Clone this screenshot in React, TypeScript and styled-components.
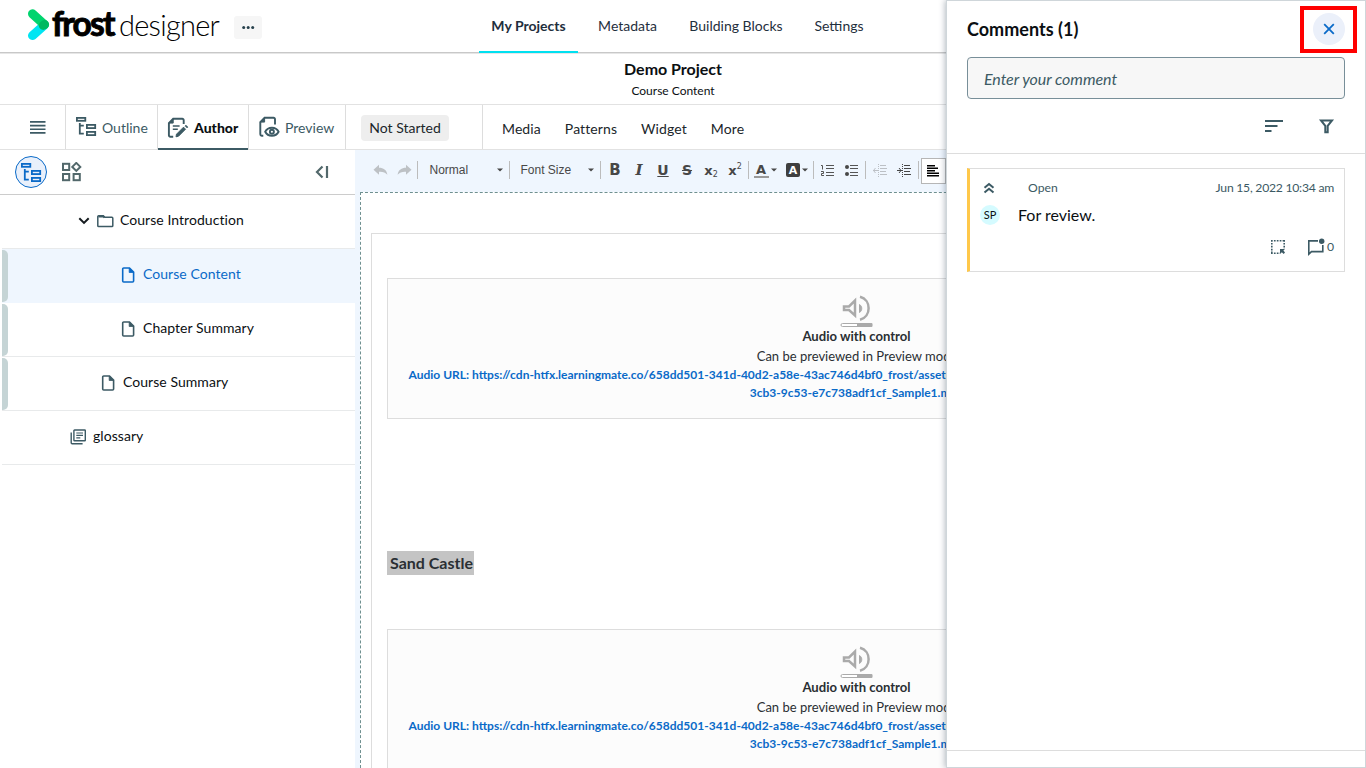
import React from 'react';
import styled, { createGlobalStyle, css } from 'styled-components';

const slate = '#3c5a64';
const blue = '#0a6ac8';
const line = '#dddddd';

const GlobalStyle = createGlobalStyle`
  * { box-sizing: border-box; }
  body { margin: 0; background: #fff; overflow: hidden; }
  svg { display: block; flex: none; }
`;

const Page = styled.div`
  position: relative;
  width: 1366px;
  height: 768px;
  overflow: hidden;
  display: flex;
  flex-direction: column;
  background: #fff;
  color: #0b0f12;
  font-family: Lato, 'Liberation Sans', sans-serif;
  font-size: 14px;
  white-space: nowrap;
`;

const Header = styled.header`
  height: 53px;
  flex: none;
  display: flex;
  border-bottom: 1px solid #c8c8c8;
  box-shadow: 0 1px 0 #e6e6e6;
`;

const Brand = styled.div`
  width: 479px;
  display: flex;
  padding: 9px 0 0 28px;
  color: #000;
`;

const FrostWord = styled.span`
  width: 67px;
  margin-left: 2px;
  font-size: 33.5px;
  line-height: 28px;
  font-weight: 700;
  letter-spacing: -1.75px;
  -webkit-text-stroke: 0.9px #000;
`;

const DesignerWord = styled.span`
  width: 115px;
  font-size: 29px;
  line-height: 31px;
  font-weight: 300;
  letter-spacing: -0.75px;
`;

const MoreButton = styled.button`
  width: 28px;
  height: 23px;
  margin-top: 7px;
  border: 0;
  border-radius: 3px;
  padding: 0;
  background: #f6f6f6;
  display: flex;
  align-items: center;
  justify-content: center;
`;

const Nav = styled.nav`
  display: flex;
  height: 53px;
`;

const NavItem = styled.a<{ $w: number; $active?: boolean }>`
  width: ${p => p.$w}px;
  height: 53px;
  padding-top: 17px;
  line-height: 18px;
  text-align: center;
  color: #1f2f3d;
  ${p => p.$active && css`
    font-weight: 700;
    border-bottom: 2px solid #00e0f0;
  `}
`;

const TitleBar = styled.div`
  height: 52px;
  flex: none;
  width: 1346px;
  text-align: center;
`;

const ProjectTitle = styled.h1`
  margin: 0;
  padding-top: 6px;
  font-size: 16px;
  line-height: 20px;
  font-weight: 700;
  letter-spacing: -0.02px;
`;

const ProjectSub = styled.div`
  margin-top: 4px;
  font-size: 12px;
  line-height: 16px;
`;

const ModeBar = styled.div`
  height: 46px;
  flex: none;
  display: flex;
  border-top: 1px solid #e2e2e2;
  border-bottom: 1px solid #e2e2e2;
  margin-top: -1px;
`;

const ModeCell = styled.div<{ $w: number; $pad?: number; $top?: number; $active?: boolean }>`
  width: ${p => p.$w}px;
  height: ${p => (p.$active ? 45 : 44)}px;
  padding: ${p => p.$top ?? 0}px 0 0 ${p => p.$pad ?? 9}px;
  border-right: 1px solid ${line};
  display: flex;
  align-items: center;
  gap: 5px;
  color: ${p => (p.$active ? '#0b0f12' : slate)};
  font-weight: ${p => (p.$active ? 900 : 400)};
  ${p => p.$active && css`box-shadow: inset 0 -2px 0 ${slate};`}
`;

const Status = styled.span`
  height: 26px;
  width: 88px;
  line-height: 26px;
  border-radius: 4px;
  background: #eeeeee;
  text-align: center;
  color: #20262a;
`;

const Menu = styled.div`
  display: flex;
  gap: 24px;
  padding: 15px 0 0 19px;
  line-height: 18px;
  letter-spacing: 0.1px;
  color: #20262a;
`;

const Body = styled.div`
  flex: 1;
  min-height: 0;
  display: flex;
`;

const Sidebar = styled.aside`
  width: 355px;
  flex: none;
`;

const SideTools = styled.div`
  height: 45px;
  display: flex;
  align-items: center;
  padding-left: 15px;
  border-bottom: 1px solid #cccccc;
`;

const RoundTool = styled.button`
  width: 32px;
  height: 32px;
  padding: 2px 0 0 0;
  border: 1px solid ${blue};
  border-radius: 50%;
  background: #e9f0fb;
  display: flex;
  align-items: center;
  justify-content: center;
  margin-right: 15px;
`;

const Collapse = styled.span`
  margin-left: 233px;
`;

const TreeRow = styled.div<{ $indent: number; $active?: boolean; $marked?: boolean }>`
  height: 54px;
  display: flex;
  align-items: center;
  margin-left: 2px;
  padding: 0 0 5px ${p => p.$indent - 2}px;
  border-bottom: 1px solid ${p => (p.$active ? '#eff6fe' : '#e8eaeb')};
  background: ${p => (p.$active ? '#eff6fe' : '#fff')};
  color: ${p => (p.$active ? blue : '#0b0f12')};
  letter-spacing: 0.05px;
  ${p => p.$marked && css`
    padding-left: 0;
    &::before {
      content: '';
      align-self: flex-start;
      flex: none;
      width: 6px;
      height: 52px;
      margin: 1px ${p.$indent - 8}px -5px 0;
      border-radius: 0 5px 5px 0;
      background: #c5d4d5;
    }
  `}
`;

const TreeIcon = styled.span`
  width: 24px;
  flex: none;
  padding-top: 4px;
`;

const Chevron = styled.span`
  width: 18px;
  padding-top: 4px;
`;

const Editor = styled.main`
  flex: 1;
  min-width: 0;
  background: #eff6fe;
  display: flex;
  flex-direction: column;
`;

const Toolbar = styled.div`
  height: 42px;
  flex: none;
  display: flex;
  align-items: center;
  padding-left: 13px;
  padding-bottom: 2px;
`;

const Tool = styled.span<{ $w?: number; $ml?: number }>`
  width: ${p => p.$w ?? 24}px;
  height: 24px;
  flex: none;
  margin-left: ${p => p.$ml ?? 0}px;
  display: flex;
  align-items: center;
  justify-content: center;
`;

const Divider = styled.i<{ $ml?: number }>`
  width: 1px;
  height: 18px;
  flex: none;
  margin-left: ${p => p.$ml ?? 0}px;
  background: #bcbcbc;
`;

const Picker = styled.span<{ $w: number; $pad?: number }>`
  width: ${p => p.$w}px;
  flex: none;
  display: flex;
  align-items: center;
  justify-content: space-between;
  padding: 0 6px 0 ${p => p.$pad ?? 10.5}px;
  font: 12px/16px 'Liberation Sans', Arial, sans-serif;
  color: #484848;
`;

const AlignButton = styled.span`
  width: 25px;
  height: 26px;
  flex: none;
  margin: 1px 0 0 2px;
  border: 1px solid #b6b6b6;
  background: #fff;
  display: flex;
  align-items: center;
  justify-content: center;
`;

const Canvas = styled.div`
  flex: 1;
  min-height: 0;
  margin-left: 5px;
  padding: 40px 0 0 10px;
  border: 1px dashed #6f9090;
  border-bottom: 0;
  background: #fff;
`;

const Sheet = styled.div`
  width: 971px;
  height: 700px;
  padding: 44px 15px 0;
  border: 1px solid ${line};
`;

const AudioBox = styled.section`
  width: 939px;
  height: 141px;
  border: 1px solid ${line};
  background: #fcfcfc;
  display: flex;
  flex-direction: column;
  align-items: center;
  padding-top: 15px;
  overflow: hidden;
  color: #2a2f33;
`;

const AudioName = styled.b`
  font-size: 13.1px;
  line-height: 20px;
  margin-top: -2px;
`;

const AudioHint = styled.span`
  font-size: 13px;
  line-height: 20px;
  padding-left: 1px;
`;

const AudioLink = styled.a<{ $lead?: boolean }>`
  font-size: 12px;
  line-height: 18px;
  font-weight: 700;
  color: ${blue};
  padding-left: 1px;
  ${p => p.$lead && css`
    align-self: flex-start;
    padding-left: 20.5px;
  `}
`;

const Selected = styled.h2`
  width: 87px;
  height: 24px;
  margin: 132px 0 54px;
  padding-left: 3px;
  background: #c4c4c4;
  color: #2a2f33;
  font-size: 16px;
  line-height: 24px;
  font-weight: 700;
`;

const Drawer = styled.aside`
  position: absolute;
  top: 0;
  left: 946px;
  width: 420px;
  height: 768px;
  border: 1px solid #cfd6da;
  background: #fff;
  box-shadow: -1px 0 6px rgba(40, 60, 80, 0.35);
  display: flex;
  flex-direction: column;
`;

const DrawerTop = styled.div`
  height: 153px;
  flex: none;
  padding: 0 20px;
  border-bottom: 1px solid ${line};
`;

const DrawerHead = styled.div`
  height: 56px;
  display: flex;
  justify-content: space-between;
  margin-right: -12px;
`;

const DrawerTitle = styled.h2`
  margin: 0;
  padding-top: 16px;
  font-size: 18px;
  line-height: 24px;
  font-weight: 700;
  letter-spacing: 0.03px;
`;

const Highlight = styled.div`
  width: 57px;
  height: 47px;
  margin-top: 5px;
  padding-bottom: 1px;
  border: 4px solid #ff0000;
  display: flex;
  align-items: center;
  justify-content: center;
`;

const CloseButton = styled.button`
  width: 32px;
  height: 32px;
  padding: 0;
  border: 0;
  border-radius: 50%;
  background: #ebf0fa;
  display: flex;
  align-items: center;
  justify-content: center;
`;

const CommentField = styled.div`
  height: 42px;
  padding: 1px 0 0 16px;
  border: 1px solid #788f99;
  border-radius: 4px;
  background: #f7f7f7;
  color: ${slate};
  font-size: 16px;
  line-height: 39px;
  letter-spacing: -0.05px;
  font-style: italic;
`;

const FilterRow = styled.div`
  display: flex;
  justify-content: flex-end;
  align-items: center;
  gap: 33px;
  padding: 17px 9px 0 0;
`;

const DrawerList = styled.div`
  flex: 1;
  padding: 14px 20px;
`;

const DrawerFoot = styled.div`
  height: 17px;
  border-top: 1px solid ${line};
`;

const Card = styled.article`
  height: 104px;
  border: 1px solid ${line};
  border-left: 3px solid #ffc84a;
  padding: 10px 10px 0 10px;
`;

const CardRow = styled.div<{ $h: number; $end?: boolean }>`
  height: ${p => p.$h}px;
  display: flex;
  align-items: center;
  justify-content: ${p => (p.$end ? 'flex-end' : 'flex-start')};
`;

const Meta = styled.span<{ $date?: boolean; $ml?: number }>`
  font-size: 12.2px;
  line-height: 16px;
  color: ${slate};
  margin-left: ${p => (p.$date ? 'auto' : `${p.$ml ?? 0}px`)};
  letter-spacing: ${p => (p.$date ? '-0.25px' : 'normal')};
`;

const Avatar = styled.span`
  width: 20px;
  height: 20px;
  margin-right: 18px;
  border-radius: 50%;
  background: #d5fbff;
  font-size: 11px;
  line-height: 20px;
  text-align: center;
`;

const CommentText = styled.span`
  font-size: 16px;
  line-height: 22px;
`;

const RegionMark = styled.svg`
  margin-right: 21px;
`;

const OutlineIcon = ({ color = slate }: { color?: string }) => (
  <svg width="22" height="22" viewBox="0 0 22 22" fill="none" stroke={color} strokeWidth="1.8">
    <rect x="1.900" y="1.900" width="8.400" height="2.900" />
    <path d="M4.800 7v10.700h4M4.800 9.700h4" />
    <rect x="11.900" y="8.900" width="8.300" height="3.200" />
    <rect x="11.900" y="15.900" width="8.300" height="3.200" />
  </svg>
);

const AuthorIcon = () => (
  <svg width="22" height="22" viewBox="0 0 22 22" fill="none" stroke={slate} strokeWidth="1.9">
    <path d="M16.700 7V3.200a1.400 1.400 0 0 0-1.400-1.400H6.200L1.900 6.100v12.200a1.400 1.400 0 0 0 1.400 1.400h2.900" />
    <path d="M6.200 1.800v4.300H1.900z" fill={slate} strokeWidth="1" />
    <path d="M5.800 9h6.800M5.800 12.200h5" strokeWidth="1.400" />
    <path d="M9 19.800l.5-2.600 7-7 2 2-7 7z" fill={slate} strokeWidth="1" />
    <path d="M18 9.200l.9-.9 1.800 1.800-.9.900" fill={slate} strokeWidth="1" />
  </svg>
);

const PreviewIcon = () => (
  <svg width="22" height="22" viewBox="0 0 22 22" fill="none" stroke={slate} strokeWidth="1.9">
    <path d="M17 8.500V3.200a1.400 1.400 0 0 0-1.400-1.400H6.600L2.300 6.100v12.200a1.400 1.400 0 0 0 1.400 1.400h1.600" />
    <path d="M6.600 1.800v4.300H2.300z" fill={slate} strokeWidth="1" />
    <path d="M7.200 15.800c1.400-2.700 3.800-4 6.700-4s5.300 1.300 6.700 4c-1.400 2.700-3.800 4-6.700 4s-5.300-1.300-6.700-4z" />
    <circle cx="13.900" cy="15.800" r="2" />
  </svg>
);

const FileIcon = ({ color = slate }: { color?: string }) => (
  <svg width="18" height="18" viewBox="0 0 18 18" fill="none" stroke={color} strokeWidth="1.600">
    <path d="M10.500 2H4.700a1 1 0 0 0-1 1v12a1 1 0 0 0 1 1h8.900a1 1 0 0 0 1-1V6.200z" />
    <path d="M10.200 2v4.500h4.400z" fill={color} strokeWidth=".8" />
  </svg>
);

const FolderIcon = () => (
  <svg width="18" height="18" viewBox="0 0 18 18" fill="none" stroke={slate} strokeWidth="1.500">
    <path d="M2.700 3.800h4.600l1.600 1.500h7a.9.900 0 0 1 .9.900v7.500a.9.900 0 0 1-.9.900H2.700a.9.900 0 0 1-.9-.9V4.700a.9.900 0 0 1 .9-.9z" />
    <path d="M2.500 4.500h4.800l1.200 1.200" strokeWidth="1.800" />
  </svg>
);

const GlossaryIcon = () => (
  <svg width="18" height="18" viewBox="0 0 18 18" fill="none" stroke={slate} strokeWidth="1.400">
    <rect x="4.900" y="2" width="11.400" height="10.800" rx=".6" />
    <path d="M2.200 4.400v10.400a.9.900 0 0 0 .9.900h10.500" />
    <path d="M7.300 5h6.700M7.300 7.400h6.700M7.300 9.800h4" strokeWidth="1.200" />
  </svg>
);

const Caret = () => (
  <svg width="6" height="4" viewBox="0 0 6 4"><path d="M0 .5h6L3 3.600z" fill="#474747" /></svg>
);

const Undo = ({ flip }: { flip?: boolean }) => (
  <svg width="15" height="12" viewBox="0 0 15 12">
    <path
      transform={flip ? 'translate(15 0) scale(-1 1)' : undefined}
      d="M6 .8v3c4.400 0 7.600 2 8.400 7C12.400 8.400 9.800 7.600 6 7.800v3L.5 5.800z"
      fill="#bdc1c5"
    />
  </svg>
);

const Glyph = styled.span<{ $size?: number; $serif?: boolean; $line?: string; $color?: string }>`
  font-family: ${p => (p.$serif ? "'DejaVu Serif', serif" : "'DejaVu Sans', sans-serif")};
  font-size: ${p => p.$size ?? 15}px;
  line-height: 17px;
  font-weight: 700;
  font-style: ${p => (p.$serif ? 'italic' : 'normal')};
  text-decoration: ${p => p.$line ?? 'none'};
  text-decoration-thickness: 1px;
  color: ${p => p.$color ?? '#474747'};
`;

const Script = styled.span<{ $up?: boolean }>`
  font: 400 8px/8px 'DejaVu Sans', sans-serif;
  color: #474747;
  margin-top: ${p => (p.$up ? -6 : 10)}px;
`;

const ColorA = styled.span`
  width: 15px;
  height: 16px;
  border-bottom: 2px solid #999;
  margin-right: 2px;
  display: flex;
  justify-content: center;
  align-items: center;
`;

const FilledA = styled.span`
  width: 14px;
  height: 14px;
  border-radius: 2px;
  background: #3f3f3f;
  margin-right: 2px;
  display: flex;
  justify-content: center;
  align-items: center;
`;

const NumberList = () => (
  <svg width="13" height="13" viewBox="0 0 13 13" fill="none" stroke="#555">
    <path d="M0 1.500h1.500v4M0 7.500h2.500v2H.5v2H3" />
    <path d="M5 1.500h8M5 4.500h8M5 8.500h8M5 11.500h8" />
  </svg>
);

const BulletList = () => (
  <svg width="13" height="13" viewBox="0 0 13 13" fill="none" stroke="#555">
    <circle cx="2" cy="3" r="2" fill="#474747" stroke="none" />
    <circle cx="2" cy="10" r="2" fill="#474747" stroke="none" />
    <path d="M5 1.500h8M5 4.500h8M5 8.500h8M5 11.500h8" />
  </svg>
);

const Indent = ({ out }: { out?: boolean }) => (
  <svg width="14" height="13" viewBox="0 0 14 13" fill="none" stroke={out ? '#bcc0c5' : '#474747'}>
    <path d="M5.500 0v13" strokeDasharray="1 1" />
    <path d="M7 1.500h6M7 4.500h7M7 7.500h6M7 10.500h7" />
    <path d={out ? 'M0 6.500h5M2.500 4L.5 6.500l2 2.500' : 'M0 6.500h5M2 4l2 2.500-2 2.500'} />
  </svg>
);

const Speaker = () => (
  <svg width="34" height="34" viewBox="0 0 34 34" fill="none" stroke="#aaa">
    <path d="M4 12.500h5L15 6.500v15l-6-5.500H4z" strokeWidth="2.500" />
    <path d="M19.500 10.500c3 1.800 3 6.200 0 8z" fill="#aaa" strokeWidth="1" />
    <path d="M20 2.800c11.500 3 11.500 20 0 23" strokeWidth="2.500" />
    <rect x="1" y="29.500" width="31" height="3" rx="1.500" fill="#fff" strokeWidth="1" />
    <path d="M17 31h15.300" strokeWidth="3.800" />
  </svg>
);

function AudioWidget() {
  return (
    <AudioBox>
      <Speaker />
      <AudioName>Audio with control</AudioName>
      <AudioHint>Can be previewed in Preview mode</AudioHint>
      <AudioLink $lead>
        Audio URL: https://cdn-htfx.learningmate.co/658dd501-341d-40d2-a58e-43ac746d4bf0_frost/assets/
      </AudioLink>
      <AudioLink>3cb3-9c53-e7c738adf1cf_Sample1.mp3</AudioLink>
    </AudioBox>
  );
}

export default function App() {
  return (
    <Page>
      <GlobalStyle />
      <Header>
        <Brand>
          <svg width="22" height="32" viewBox="0 0 22 32" fill="none" strokeWidth="9" strokeLinecap="round">
            <path d="M4.500 26.600L16 16.400" stroke="#00e5f2" />
            <path d="M4.500 4.800L16.400 15.600" stroke="#00d46e" />
            <path d="M15.300 16.400L16.600 15.500" stroke="#00b95f" />
          </svg>
          <FrostWord>frost</FrostWord>
          <DesignerWord>designer</DesignerWord>
          <MoreButton>
            <svg width="13" height="4" viewBox="0 0 13 4" fill="#27414c">
              <circle cx="1.700" cy="1.500" r="1.500" /><circle cx="6.200" cy="1.500" r="1.500" /><circle cx="10.700" cy="1.500" r="1.500" />
            </svg>
          </MoreButton>
        </Brand>
        <Nav>
          <NavItem $w={99} $active>My Projects</NavItem>
          <NavItem $w={99}>Metadata</NavItem>
          <NavItem $w={118}>Building Blocks</NavItem>
          <NavItem $w={88}>Settings</NavItem>
        </Nav>
      </Header>
      <TitleBar>
        <ProjectTitle>Demo Project</ProjectTitle>
        <ProjectSub>Course Content</ProjectSub>
      </TitleBar>
      <ModeBar>
        <ModeCell $w={66} $pad={29.500} $top={2}>
          <svg width="16" height="14" viewBox="0 0 16 14" fill={slate}>
            <path d="M0 0h15.500v1.700H0zM0 3.700h15.500v1.700H0zM0 7.400h15.500v1.700H0zM0 11.100h15.500v1.700H0z" />
          </svg>
        </ModeCell>
        <ModeCell $w={92}><OutlineIcon />Outline</ModeCell>
        <ModeCell $w={91} $active><AuthorIcon />Author</ModeCell>
        <ModeCell $w={97}><PreviewIcon />Preview</ModeCell>
        <ModeCell $w={137} $pad={15} $top={2}><Status>Not Started</Status></ModeCell>
        <Menu>
          <span>Media</span><span>Patterns</span><span>Widget</span><span>More</span>
        </Menu>
      </ModeBar>
      <Body>
        <Sidebar>
          <SideTools>
            <RoundTool><OutlineIcon color={blue} /></RoundTool>
            <svg width="20" height="20" viewBox="0 0 20 20" fill="none" stroke="#52686b" strokeWidth="2">
              <rect x="1" y="1.800" width="6.200" height="6.200" />
              <rect x="1" y="12" width="6.200" height="6.200" />
              <rect x="11.600" y="12" width="6.200" height="6.200" />
              <path d="M14.300.9l4 4-4 4-4-4z" />
            </svg>
            <Collapse>
              <svg width="14" height="14" viewBox="0 0 14 14" fill="none" stroke="#52686b" strokeWidth="2.200">
                <path d="M7.500 1.500L2 7l5.500 5.500M12 1v12" />
              </svg>
            </Collapse>
          </SideTools>
          <TreeRow $indent={78}>
            <Chevron>
              <svg width="12" height="8" viewBox="0 0 12 8" fill="none" stroke="#151b1f" strokeWidth="2">
                <path d="M1.300 1.200L6 5.900l4.700-4.700" />
              </svg>
            </Chevron>
            <TreeIcon><FolderIcon /></TreeIcon>
            <span>Course Introduction</span>
          </TreeRow>
          <TreeRow $indent={119} $active $marked>
            <TreeIcon><FileIcon color={blue} /></TreeIcon>
            <span>Course Content</span>
          </TreeRow>
          <TreeRow $indent={119} $marked>
            <TreeIcon><FileIcon /></TreeIcon>
            <span>Chapter Summary</span>
          </TreeRow>
          <TreeRow $indent={99} $marked>
            <TreeIcon><FileIcon /></TreeIcon>
            <span>Course Summary</span>
          </TreeRow>
          <TreeRow $indent={69}>
            <TreeIcon><GlossaryIcon /></TreeIcon>
            <span>glossary</span>
          </TreeRow>
        </Sidebar>
        <Editor>
          <Toolbar>
            <Tool><Undo /></Tool>
            <Tool><Undo flip /></Tool>
            <Divider $ml={1} />
            <Picker $w={91} $pad={11.500}>Normal<Caret /></Picker>
            <Divider />
            <Picker $w={90}>Font Size<Caret /></Picker>
            <Divider />
            <Tool $ml={2}><Glyph>B</Glyph></Tool>
            <Tool><Glyph $serif>I</Glyph></Tool>
            <Tool><Glyph $size={14} $line="underline">U</Glyph></Tool>
            <Tool><Glyph $size={14} $line="line-through">S</Glyph></Tool>
            <Tool><Glyph $size={13}>x</Glyph><Script>2</Script></Tool>
            <Tool><Glyph $size={13}>x</Glyph><Script $up>2</Script></Tool>
            <Divider $ml={1} />
            <Tool $w={32}><ColorA><Glyph $size={13}>A</Glyph></ColorA><Caret /></Tool>
            <Tool $w={32}><FilledA><Glyph $size={11} $color="#fff">A</Glyph></FilledA><Caret /></Tool>
            <Divider />
            <Tool $ml={1}><NumberList /></Tool>
            <Tool><BulletList /></Tool>
            <Divider $ml={2} />
            <Tool $ml={2}><Indent out /></Tool>
            <Tool><Indent /></Tool>
            <Divider $ml={2} />
            <AlignButton>
              <svg width="13" height="12" viewBox="0 0 13 12" fill="#000">
                <path d="M0 0h8v1.500H0zM0 2.500h11v1.500H0zM0 5h8v1.500H0zM0 7.500h12v1.500H0zM0 10h12v1.500H0z" />
              </svg>
            </AlignButton>
          </Toolbar>
          <Canvas>
            <Sheet>
              <AudioWidget />
              <Selected>Sand Castle</Selected>
              <AudioWidget />
            </Sheet>
          </Canvas>
        </Editor>
      </Body>
      <Drawer>
        <DrawerTop>
          <DrawerHead>
            <DrawerTitle>Comments (1)</DrawerTitle>
            <Highlight>
              <CloseButton>
                <svg width="12" height="12" viewBox="0 0 12 12" stroke={blue} strokeWidth="1.800">
                  <path d="M1.200 1.200l9.600 9.600M10.800 1.200l-9.600 9.600" />
                </svg>
              </CloseButton>
            </Highlight>
          </DrawerHead>
          <CommentField>Enter your comment</CommentField>
          <FilterRow>
            <svg width="18" height="12" viewBox="0 0 18 12" stroke={slate} strokeWidth="2">
              <path d="M0 1h18M0 6h12.500M0 11h6.500" />
            </svg>
            <svg width="20" height="20" viewBox="0 0 20 20" fill="none" stroke={slate} strokeWidth="2">
              <path d="M5 4.400h11l-4.300 5.400v6.400H9.300V9.800z" />
            </svg>
          </FilterRow>
        </DrawerTop>
        <DrawerList>
          <Card>
            <CardRow $h={18}>
              <svg width="18" height="12" viewBox="0 0 18 12" fill="none" stroke={slate} strokeWidth="2">
                <path d="M4.500 5.800L9 2l4.500 3.800M4.500 10.600L9 6.800l4.500 3.800" />
              </svg>
              <Meta $ml={30}>Open</Meta>
              <Meta $date>Jun 15, 2022 10:34 am</Meta>
            </CardRow>
            <CardRow $h={36}>
              <Avatar>SP</Avatar>
              <CommentText>For review.</CommentText>
            </CardRow>
            <CardRow $h={28} $end>
              <RegionMark width="14" height="14" viewBox="0 0 14 14" fill="none" stroke={slate} strokeWidth="1.600">
                <path d="M.8 0v14M0 .8h14M13.200 0v9M0 13.200h9" strokeDasharray="1.700 1.200" />
                <path d="M9 9h5l-1.600 1.600L14 12.500 12.700 14l-1.900-1.700L9 14z" fill={slate} stroke="none" />
              </RegionMark>
              <svg width="21" height="18" viewBox="0 0 21 18" fill="none" stroke={slate} strokeWidth="1.600">
                <path d="M12 2.900H2.800v13.200l2.700-2.500h11.300V7" />
                <circle cx="15.700" cy="3.200" r="2.700" fill={slate} stroke="none" />
              </svg>
              <Meta>0</Meta>
            </CardRow>
          </Card>
        </DrawerList>
        <DrawerFoot />
      </Drawer>
    </Page>
  );
}
